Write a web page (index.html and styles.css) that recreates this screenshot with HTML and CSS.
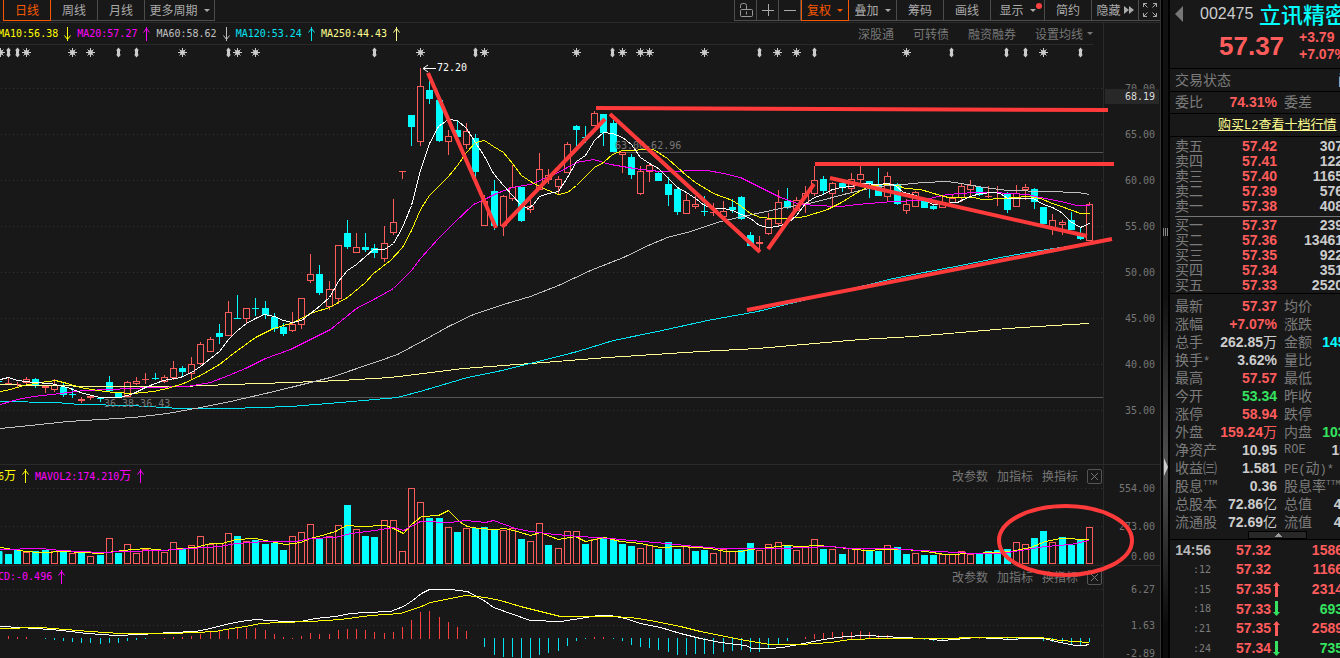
FILE: index.html
```html
<!DOCTYPE html>
<html lang="zh-CN">

<head>
  <meta charset="UTF-8" />
  <meta name="viewport" content="width=device-width, initial-scale=1.0" />
  <title>立讯精密 002475</title>
  <link rel="stylesheet" href="styles.css">
</head>

<body>
  <main class="main">
    <div class="toolbar">
      <div class="tabs">
        <button class="tab active">日线</button>
        <button class="tab">周线</button>
        <button class="tab">月线</button>
        <button class="tab tab-wide">更多周期<span class="caret"></span></button>
      </div>
      <div class="tools">
        <button class="tool tool-icon" aria-label="锁定">
          <svg width="16" height="16" viewBox="0 0 16 16" fill="none" stroke="#999">
            <rect x="2.5" y="7.500" width="12" height="7" rx="1" />
            <path d="M2.500 6V3.500a2 2 0 0 1 2-2h2a2 2 0 0 1 2 2V7M8.500 9.500v3" />
          </svg>
        </button>
        <button class="tool tool-icon" aria-label="放大">
          <svg width="12" height="12" viewBox="0 0 12 12" stroke="#aaa"><path d="M0 6.500h12M6.500 0v12" /></svg>
        </button>
        <button class="tool tool-icon" aria-label="缩小">
          <svg width="12" height="12" viewBox="0 0 12 12" stroke="#aaa"><path d="M0 6.500h12" /></svg>
        </button>
        <button class="tool active">复权<span class="caret"></span></button>
        <button class="tool tool-mid">叠加<span class="caret"></span></button>
        <button class="tool">筹码</button>
        <button class="tool">画线</button>
        <button class="tool tool-wide">显示<span class="caret"></span><span class="dot"></span></button>
        <button class="tool">简约</button>
        <button class="tool tool-hide">隐藏
          <svg width="10" height="8" viewBox="0 0 10 8" fill="#aaa"><path d="M0 0l5 4-5 4zM5 0l5 4-5 4z" /></svg>
        </button>
        <button class="tool tool-icon" aria-label="全屏">
          <svg width="14" height="14" viewBox="0 0 14 14" fill="none" stroke="#aaa">
            <path d="M.5 4V.5H4M.5.5l4 4M10 .5h3.500V4M13.500.5l-4 4M.5 10v3.500H4M.5 13.500l4-4M10 13.500h3.500V10M13.500 13.500l-4-4" />
          </svg>
        </button>
      </div>
    </div>

    <section class="panel panel-price">
      <div class="plot">
        <div class="legend legend-ma">
          <div class="readings">
            <span class="yellow">MA10:56.38</span><svg class="arrow yellow down"><use href="#arrow" /></svg>
            <span class="magenta">MA20:57.27</span><svg class="arrow magenta"><use href="#arrow" /></svg>
            <span class="silver">MA60:58.62</span><svg class="arrow silver down"><use href="#arrow" /></svg>
            <span class="aqua">MA120:53.24</span><svg class="arrow aqua"><use href="#arrow" /></svg>
            <span class="cream">MA250:44.43</span><svg class="arrow cream"><use href="#arrow" /></svg>
          </div>
          <div class="links">
            <button>深股通</button>
            <button>可转债</button>
            <button>融资融券</button>
            <button>设置均线<span class="caret"></span></button>
          </div>
        </div>
        <svg id="price" class="chart" width="1103" height="419" viewBox="0 45 1103 419"></svg>
      </div>
      <div class="axis">
        <span>70.00</span><span>65.00</span><span>60.00</span><span>55.00</span>
        <span>50.00</span><span>45.00</span><span>40.00</span><span>35.00</span>
        <span class="price-tag">68.19</span>
      </div>
    </section>

    <section class="panel panel-volume">
      <div class="plot">
        <div class="legend">
          <div class="readings">
            <span class="yellow">6<span class="unit">万</span></span><svg class="arrow yellow"><use href="#arrow" /></svg>
            <span class="magenta">MAVOL2:174.210<span class="unit">万</span></span><svg class="arrow magenta"><use href="#arrow" /></svg>
          </div>
          <div class="links links-indicator">
            <button>改参数</button>
            <button>加指标</button>
            <button>换指标</button>
            <button class="close" aria-label="关闭"><svg width="9" height="9" viewBox="0 0 9 9" stroke="#777"><path d="M1 1l7 7M8 1l-7 7" /></svg></button>
          </div>
        </div>
        <svg id="volume" class="chart" width="1103" height="78" viewBox="0 487 1103 78"></svg>
      </div>
      <div class="axis">
        <span>554.00</span><span>273.00</span><span>0.00</span>
      </div>
    </section>

    <section class="panel panel-macd">
      <div class="plot">
        <div class="legend">
          <div class="readings">
            <span class="magenta">CD:-0.496</span><svg class="arrow magenta"><use href="#arrow" /></svg>
          </div>
          <div class="links links-indicator">
            <button>改参数</button>
            <button>加指标</button>
            <button>换指标</button>
            <button class="close" aria-label="关闭"><svg width="9" height="9" viewBox="0 0 9 9" stroke="#777"><path d="M1 1l7 7M8 1l-7 7" /></svg></button>
          </div>
        </div>
        <svg id="macd" class="chart" width="1103" height="70" viewBox="0 588 1103 70"></svg>
      </div>
      <div class="axis">
        <span>6.27</span><span>1.63</span><span>-2.89</span>
      </div>
    </section>

    <!-- hand drawn trend lines -->
    <svg class="drawings" width="1161" height="658" viewBox="0 0 1161 658">
      <path d="M596 108L1108 110M815 164H1114M428 73L496 228M502 227L605 119M610 114L760 252M768 249L814 184M830 178L1087 236M747 310L1112 239" />
      <ellipse cx="1065.500" cy="540.500" rx="66.500" ry="34.500" />
    </svg>
  </main>

  <div class="splitter">
    <span class="grip"></span>
    <span class="fold"></span>
  </div>

  <aside class="side">
    <div class="side-inner">
      <header class="quote">
        <button class="prev" aria-label="上一个"></button>
        <span class="code">002475</span>
        <h1>立讯精密</h1>
        <strong class="last">57.37</strong>
        <div class="change"><span>+3.79</span><span>+7.07%</span></div>
      </header>
      <div class="line status"><span>交易状态</span><span class="state">闭市</span></div>
      <div class="line stat"><span>委比</span><b class="red">74.31%</b><span>委差</span></div>
      <div class="line buy"><a href="#">购买<span class="latin">L2</span>查看十档行情</a></div>

      <table class="book">
        <tbody>
          <tr><th>卖五</th><td class="red">57.42</td><td>307</td></tr>
          <tr><th>卖四</th><td class="red">57.41</td><td>122</td></tr>
          <tr><th>卖三</th><td class="red">57.40</td><td>1165</td></tr>
          <tr><th>卖二</th><td class="red">57.39</td><td>576</td></tr>
          <tr><th>卖一</th><td class="red">57.38</td><td>408</td></tr>
        </tbody>
      </table>
      <hr>
      <table class="book">
        <tbody>
          <tr><th>买一</th><td class="red">57.37</td><td>239</td></tr>
          <tr><th>买二</th><td class="red">57.36</td><td>13461</td></tr>
          <tr><th>买三</th><td class="red">57.35</td><td>922</td></tr>
          <tr><th>买四</th><td class="red">57.34</td><td>351</td></tr>
          <tr><th>买五</th><td class="red">57.33</td><td>2520</td></tr>
        </tbody>
      </table>

      <div class="stats">
        <div class="stat"><span>最新</span><b class="red">57.37</b><span>均价</span><b></b></div>
        <div class="stat"><span>涨幅</span><b class="red">+7.07%</b><span>涨跌</span><b></b></div>
        <div class="stat"><span>总手</span><b>262.85<i>万</i></b><span>金额</span><b class="cyan">145.96<i>亿</i></b></div>
        <div class="stat"><span>换手<span class="latin">*</span></span><b>3.62%</b><span>量比</span><b></b></div>
        <div class="stat"><span>最高</span><b class="red">57.57</b><span>最低</span><b></b></div>
        <div class="stat"><span>今开</span><b class="green">53.34</b><span>昨收</span><b></b></div>
        <div class="stat"><span>涨停</span><b class="red">58.94</b><span>跌停</span><b></b></div>
        <div class="stat"><span>外盘</span><b class="red">159.24<i>万</i></b><span>内盘</span><b class="green">103.61<i>万</i></b></div>
        <div class="stat"><span>净资产</span><b>10.95</b><span class="latin">ROE</span><b>15.01%</b></div>
        <div class="stat"><span>收益㈢</span><b>1.581</b><span><span class="latin">PE(</span>动<span class="latin">)*</span></span><b></b></div>
        <div class="stat"><span>股息<sup>TTM</sup></span><b>0.36</b><span>股息率<sup>TTM</sup></span><b></b></div>
        <div class="stat"><span>总股本</span><b>72.86<i>亿</i></b><span>总值</span><b>4180<i>亿</i></b></div>
        <div class="stat"><span>流通股</span><b>72.69<i>亿</i></b><span>流值</span><b>4170<i>亿</i></b></div>
      </div>
      <button class="collapse" aria-label="收起"></button>

      <div class="ticks">
        <div class="tick"><b class="time">14:56</b><b class="red">57.32</b><span></span><b class="red">1586</b></div>
        <div class="tick"><span class="time">:12</span><b class="red">57.32</b><span></span><b class="red">1166</b></div>
        <div class="tick"><span class="time">:15</span><b class="red">57.35</b><svg class="move red"><use href="#move" /></svg><b class="red">2314</b></div>
        <div class="tick"><span class="time">:18</span><b class="red">57.33</b><svg class="move green down"><use href="#move" /></svg><b class="green">693</b></div>
        <div class="tick"><span class="time">:21</span><b class="red">57.35</b><svg class="move red"><use href="#move" /></svg><b class="red">2589</b></div>
        <div class="tick"><span class="time">:24</span><b class="red">57.34</b><svg class="move green down"><use href="#move" /></svg><b class="green">735</b></div>
      </div>
    </div>
  </aside>

  <svg class="symbols" width="0" height="0">
    <symbol id="arrow" viewBox="0 0 7 14"><path d="M3.500 0v14M.5 5.500l3-4 3 4" fill="none" stroke="currentColor" /></symbol>
    <symbol id="move" viewBox="0 0 7 15"><path d="M3.500 0L7 4H5v11H2V4H0z" fill="currentColor" /></symbol>
  </svg>

  <script src="chart.js"></script>
</body>

</html>
```

FILE: styles.css
```css
* {
  box-sizing: border-box;
}

body {
  display: flex;
  height: 100vh;
  margin: 0;
  overflow: hidden;
  background-color: #181818;
  color: #ccc;
  font-family: "Liberation Sans", "Noto Sans CJK SC", sans-serif;
  font-size: 14px;
}

button {
  margin: 0;
  padding: 0;
  border: none;
  background: none;
  color: inherit;
  font: inherit;
  cursor: pointer;
}

.red {
  color: #ff5c5c;
}

.green {
  color: #35e35f;
}

.cyan {
  color: #00ffff;
}

.yellow {
  color: #ffff00;
}

.magenta {
  color: #ff00ff;
}

.silver {
  color: #c0c0c0;
}

.aqua {
  color: #00e4f4;
}

.cream {
  color: #ffff90;
}

.symbols {
  position: absolute;
}

.caret {
  border: 3px solid transparent;
  border-top-color: currentColor;
  border-bottom: none;
}

/* chart side */
.main {
  position: relative;
  display: flex;
  flex-direction: column;
  flex: 1;
  min-width: 0;
  overflow: hidden;
  border-right: 1px solid #333;
}

.toolbar {
  display: flex;
  justify-content: space-between;
  flex: none;
  height: 23px;
  border-bottom: 1px solid #2a2a2a;
  color: #aaa;
  font-family: "Noto Sans CJK SC", sans-serif;
  font-size: 12px;
  line-height: 20px;
}

.tabs,
.tools {
  display: flex;
  height: 21px;
}

.tabs {
  padding-left: 3px;
}

.tools {
  border-left: 1px solid #4c4c4c;
  margin-right: -1px;
}

.tab,
.tool {
  display: flex;
  align-items: center;
  justify-content: center;
  width: 47px;
  border-right: 1px solid #4c4c4c;
  border-bottom: 1px solid #4c4c4c;
}

.tab .caret,
.tool .caret {
  margin-left: 6px;
}

.tab-wide {
  width: 70px;
}

.tool-icon {
  width: 22px;
}

.tool-mid {
  width: 48px;
}

.tool-wide {
  position: relative;
  width: 54px;
}

.tool-hide {
  gap: 3px;
}

.tab.active,
.tool.active {
  width: 48px;
  border: 1px solid #f85800;
  border-top: none;
  color: #f85800;
}

.dot {
  position: absolute;
  top: 3px;
  right: 2px;
  width: 6px;
  height: 6px;
  border-radius: 50%;
  background-color: #ff4040;
}

.panel {
  display: flex;
  flex: none;
  border-bottom: 1px solid #2a2a2a;
}

.panel-price {
  height: 442px;
}

.panel-volume {
  height: 101px;
}

.panel-macd {
  height: 92px;
  border-bottom: none;
}

.plot {
  display: flex;
  flex-direction: column;
  align-items: flex-end;
  flex: 1;
  min-width: 0;
  overflow: hidden;
}

.chart {
  flex: none;
}

.legend {
  display: flex;
  align-items: center;
  justify-content: space-between;
  flex: none;
  width: 100%;
  height: 22px;
}

.legend-ma {
  width: calc(100% - 10px);
  margin-right: 10px;
  border-bottom: 1px solid #2a2a2a;
}

.readings {
  display: flex;
  align-items: center;
  gap: 6px;
  margin-left: -2px;
  font-family: "DejaVu Sans Mono", "Noto Sans CJK SC", monospace;
  font-size: 10px;
  line-height: 20px;
}

.unit {
  font-family: "Noto Sans CJK SC", sans-serif;
  font-size: 12px;
}

.arrow {
  width: 7px;
  height: 14px;
}

.down {
  transform: rotate(180deg);
}

.links {
  display: flex;
  align-items: center;
  gap: 19px;
  color: #777;
  font-family: "Noto Sans CJK SC", sans-serif;
  font-size: 12px;
  line-height: 20px;
}

.links button {
  display: flex;
  align-items: center;
}

.links .caret {
  margin-left: 4px;
}

.links-indicator {
  gap: 9px;
  padding-right: 1px;
}

.links .close {
  justify-content: center;
  width: 15px;
  height: 15px;
  border: 1px solid #555;
  border-radius: 2px;
}

.axis {
  position: relative;
  display: grid;
  align-content: start;
  flex: none;
  width: 57px;
  padding-right: 5px;
  border-left: 1px solid #2a2a2a;
  color: #777;
  font-family: "DejaVu Sans Mono", monospace;
  font-size: 10px;
  text-align: right;
  align-items: center;
}

.panel-price .axis {
  grid-auto-rows: 46px;
  padding-top: 42px;
}

.panel-volume .axis {
  grid-template-rows: 38px 38px 22px;
  padding-top: 4px;
}

.panel-macd .axis {
  grid-template-rows: 36px 36px 20px;
  padding-top: 5px;
}

.price-tag {
  position: absolute;
  top: 66px;
  right: 1px;
  width: 54px;
  height: 15px;
  padding-right: 4px;
  background-color: #282828;
  color: #ddd;
  line-height: 15px;
}

.drawings {
  position: absolute;
  top: 0;
  right: -1px;
  fill: none;
  stroke: #ff3a3a;
  stroke-width: 4px;
  pointer-events: none;
}

/* svg parts */
.grid {
  stroke: #333;
  stroke-dasharray: 1 3;
}

.up {
  fill: #181818;
  stroke: #ff5c5c;
}

.fall {
  fill: #00ffff;
  stroke: #00ffff;
}

.hist-up {
  stroke: #ff4040;
}

.hist-down {
  stroke: #00e4f4;
}

.curve {
  fill: none;
  stroke: currentColor;
}

.white {
  color: #fff;
}

.gap-line {
  stroke: #555;
}

.gap-text {
  fill: #777;
  font-family: "DejaVu Sans Mono", monospace;
  font-size: 10px;
}

.peak-text {
  fill: #fff;
  font-family: "DejaVu Sans Mono", monospace;
  font-size: 10px;
}

.peak-arrow {
  fill: none;
  stroke: #fff;
}

.mark {
  fill: #ccc;
  stroke: #ccc;
}

.diamond {
  fill: #ccc;
}

/* splitter */
.splitter {
  position: relative;
  flex: none;
  width: 9px;
  border: solid #000;
  border-width: 0 2px;
  background: linear-gradient(#111 0%, #111 45%, #505050 71%, #0c0c0c 95%);
}

.grip {
  position: absolute;
  top: 228px;
  left: 0;
  width: 5px;
  height: 8px;
  background: repeating-linear-gradient(90deg, #888 0 1px, transparent 1px 2px);
}

.fold {
  position: absolute;
  top: 458px;
  left: 1px;
  border: 9px solid transparent;
  border-left: 4px solid #ccc;
  border-right: none;
}

/* quote side */
.side {
  flex: 0 0 170px;
  overflow: hidden;
}

.side-inner {
  display: flex;
  flex-direction: column;
  width: 230px;
  height: 100%;
}

.quote {
  display: grid;
  grid-template-columns: 25px 59px 1fr;
  grid-template-rows: 28px 36px;
  align-items: center;
  flex: none;
  height: 69px;
  padding-left: 5px;
  border-bottom: 1px solid #000;
}

.prev {
  width: 8px;
  height: 16px;
  border: 8px solid transparent;
  border-left: none;
  border-right-color: #777;
}

.code {
  font-size: 16px;
}

h1 {
  margin: 0;
  color: #00ffff;
  font-family: "Noto Sans CJK SC", sans-serif;
  font-size: 22px;
  font-weight: 500;
  line-height: 26px;
  align-self: start;
}

.last {
  grid-column: 1 / 3;
  padding-left: 44px;
  color: #ff5c5c;
  font-size: 26px;
}

.change {
  display: flex;
  flex-direction: column;
  padding-left: 40px;
  color: #ff5c5c;
  font-weight: bold;
  line-height: 17px;
}

.line {
  flex: none;
  height: 22px;
  padding-left: 5px;
  border-bottom: 1px solid #000;
  color: #7c7c7c;
  line-height: 22px;
}

.status {
  height: 23px;
}

.state {
  margin-left: 107px;
  color: #ccc;
}

.buy {
  height: 23px;
  padding-left: 48px;
  font-size: 13px;
}

.buy a {
  color: #ffff90;
}

.latin {
  font-family: "Liberation Mono", monospace;
  font-size: 12px;
}

.book {
  width: 173px;
  border-collapse: collapse;
  table-layout: fixed;
  flex: none;
}

.buy + .book {
  margin-top: 2px;
}

.book th,
.book td {
  height: 15px;
  padding: 0;
  font-weight: bold;
  line-height: 15px;
  text-align: right;
}

.book th {
  width: 56px;
  padding-left: 5px;
  color: #7c7c7c;
  font-weight: normal;
  text-align: left;
}

.book td:nth-child(2) {
  width: 51px;
}

hr {
  flex: none;
  align-self: stretch;
  margin: 2px 0 1px 5px;
  border: none;
  border-top: 1px solid #777;
}

.stats {
  flex: none;
  padding-top: 3px;
  border-top: 1px solid #000;
}

.stat {
  display: grid;
  grid-template-columns: 50px 52px 52px 50px;
  height: 18px;
  padding-left: 5px;
  color: #7c7c7c;
  line-height: 18px;
  white-space: nowrap;
}

.stat.line {
  height: 22px;
  line-height: 20px;
}

.stat > :nth-child(2n) {
  justify-self: end;
}

.stat > :nth-child(3) {
  padding-left: 7px;
}

.stat b:not([class]) {
  color: #ccc;
}

.stat i {
  font-style: normal;
  font-weight: normal;
}

sup {
  font-family: "Liberation Mono", monospace;
  font-size: 8px;
  line-height: 8px;
  vertical-align: 6px;
}

.collapse {
  flex: none;
  align-self: flex-start;
  width: 59px;
  height: 8px;
  margin-left: 78px;
  border: 1px solid #000;
  background: conic-gradient(from 135deg at 50% 0, #999 90deg, #282828 0) center / 8px 4px no-repeat #282828;
}

.ticks {
  display: grid;
  flex: 1;
  min-height: 0;
  border-top: 1px solid #000;
}

.tick {
  display: grid;
  grid-template-columns: 36px 60px 10px 62px;
  align-items: center;
  padding-left: 5px;
  text-align: right;
}

.time {
  color: #bbb;
}

span.time {
  color: #7c7c7c;
  font-family: "DejaVu Sans Mono", monospace;
  font-size: 10px;
}

.move {
  width: 7px;
  height: 15px;
  margin-left: 2px;
}
```

FILE: chart.js
```js
// direction, high, body top, body bottom, low
const candles = `
u 378 383 384 384,u 382 384 385 388,u 377 379 383 384,d 378 379 385 388,u 386 386 388 393,u 379 385 390 392,d 382 387 395 397,d 388 394 395 398,
u 397 399 401 403,u 395 396 398 400,d 397 398 399 402,d 376 382 391 391,d 392 392 397 397,u 381 382 397 397,u 377 381 384 385,u 373 379 380 384,
d 373 378 379 380,u 375 377 382 383,u 361 368 378 380,d 366 368 372 377,u 357 364 374 379,u 342 344 364 365,u 337 339 352 352,d 324 333 337 344,
u 301 312 336 336,d 295 318 319 319,u 308 308 319 323,d 298 308 309 316,d 301 308 315 319,d 313 317 329 332,d 323 327 334 336,u 312 324 331 332,
u 298 298 325 329,u 254 274 281 283,d 265 274 293 295,u 281 289 307 310,u 245 245 299 304,d 220 233 247 249,u 233 247 253 253,d 233 247 250 252,
d 244 248 253 258,u 226 243 259 262,u 199 222 233 235,u 171 171 172 179,d 115 115 127 146,u 68 86 142 146,d 80 90 99 104,d 100 100 141 142,
u 130 136 142 155,d 121 130 137 137,u 123 131 145 149,d 134 138 172 178,u 195 201 226 226,d 180 191 226 230,u 195 196 226 236,u 165 187 199 201,
d 187 187 221 222,u 196 206 210 213,u 153 169 190 190,u 169 175 180 184,u 176 179 187 195,u 142 144 173 173,d 125 126 130 146,d 126 137 138 143,
u 111 113 126 126,d 114 114 133 146,d 120 123 152 152,u 152 152 155 173,d 154 157 175 179,u 166 171 194 195,u 164 165 172 182,d 172 173 181 181,
d 177 184 195 206,d 188 189 212 215,u 194 200 214 214,u 196 204 207 209,d 196 211 212 216,u 203 212 213 216,u 201 211 217 220,d 199 207 210 213,
d 196 197 219 220,d 232 235 246 246,u 236 242 244 250,u 213 219 234 235,u 190 202 224 226,d 188 201 208 209,u 197 200 211 211,u 186 193 204 213,
u 166 180 194 196,d 176 179 191 194,u 182 183 194 206,d 180 183 187 192,u 173 179 189 192,u 166 174 180 184,d 181 181 184 198,d 168 185 196 196,
u 172 176 197 201,d 183 184 204 205,u 199 204 211 214,u 191 192 207 207,d 198 198 208 208,d 204 206 209 210,u 196 202 208 208,u 194 198 203 203,
u 184 186 198 202,u 180 185 190 196,d 187 187 195 196,u 186 196 197 198,u 186 198 199 206,d 192 194 210 213,u 185 193 207 207,u 184 187 190 200,
d 188 189 202 209,d 207 207 224 224,u 214 220 228 235,u 220 222 225 235,d 212 220 230 230,d 228 235 239 240,u 202 204 241 241`.trim().split(",");

// negative values are falling days
const volumes = [-10, -14, 12, -13, -14, 13, -13, 11, -12, 8, -9, 26, -11, 20, 11, 15, 14, 12, 22, -15, 19, 28, 20, 21, 31, -28, 23, -24, -20, -21,
  -14, 28, 32, 40, -25, 28, 39, -59, 35, -28, -27, 44, 44, 13, 76, 62, -46, -46, 37, -32, 36, -36, -37, -35, 34, 36, -25, 23, 41, -19,
  16, 33, 33, -20, 25, -26, -24, -20, -18, 16, 19, -15, -22, -15, 18, -13, -14, 11, 15, 13, -14, -21, 14, 20, 22, -18, 14, 18, 25, -15,
  15, -10, 16, 16, -13, -13, 19, -17, -10, 11, -9, -9, 10, 10, 13, 10, -11, -13, -14, -15, 22, 20, -26, -33, 22, -27, -19, -24, 37];

const histogram = [3, 2, 2, 0, -1, -2, -3, -4, -5, -5, -6, -5, -5, -3, -2, -1, 0, 1, 2, 2, 3, 5, 7, 8, 10, 11, 11, 11, 9, 5,
  2, 1, 3, 6, 5, 5, 9, 10, 10, 9, 7, 6, 7, 12, 19, 27, 28, 22, 17, 12, 8, 0, -9, -17, -19, -19, -20, -20, -17, -15,
  -13, -8, -3, -1, 2, 2, -1, -3, -7, -9, -10, -12, -14, -17, -17, -16, -16, -16, -14, -13, -12, -14, -14, -10, -6, -3, 0, 2, 5, 6,
  7, 7, 7, 8, 7, 4, 4, 2, 0, 0, -2, -3, -3, -2, 0, 1, 1, 1, 0, -1, -1, 1, 0, -3, -4, -5, -6, -8, -4];

const priceCurves = {
  cream: "0,384 33,385 110,386 180,386 230,384 290,382 340,380 390,377 463,368 530,363 607,357 700,351 757,348 860,339 913,336 960,332 1007,328 1053,325 1089,323",
  aqua: "0,401 55,402 80,404 130,405 180,408 230,408 260,407 290,406 340,402 397,397 423,390 467,377 497,371 530,363 577,351 613,340 657,331 707,320 757,311 860,286 893,278 913,274 960,265 1000,257 1033,251 1067,246 1089,243",
  silver: "0,428 30,425 67,421 100,419 133,417 167,413 200,407 230,401 265,393 290,387 330,377 377,361 397,354 423,340 448,326 473,314 503,304 530,296 558,285 590,270 623,257 650,244 667,237 690,231 720,221 747,215 780,208 813,202 847,193 877,186 903,184 923,182 947,181 967,184 983,187 1007,190 1047,191 1077,192 1089,194",
  magenta: "0,404 17,399 33,396 60,393 83,390 110,389 130,388 150,387 187,386 210,382 228,375 245,368 265,358 290,349 330,329 356,308 377,297 393,288 411,270 420,258 438,238 453,223 473,204 484,199 496,193 512,187 530,184 558,172 576,162 593,159 610,164 640,169 660,171 707,170 723,173 740,177 760,187 780,197 797,203 813,205 840,206 857,204 893,201 920,200 947,194 973,192 993,192 1027,194 1040,197 1060,201 1077,205 1089,205",
  yellow: "0,391 10,389 23,385 40,382 55,380 67,383 80,387 97,390 113,392 133,393 153,391 167,388 183,383 200,375 219,364 233,353 255,337 273,328 290,323 301,318 310,313 329,307 347,297 365,282 373,273 390,260 402,247 411,230 420,209 429,195 448,176 457,165 466,152 475,142 484,140 493,146 503,152 512,163 521,175 530,181 539,186 548,190 558,194 567,192 576,185 594,167 603,162 612,154 622,150 653,149 667,158 677,167 686,175 695,182 713,193 732,200 741,206 750,213 760,217 773,218 790,218 805,216 827,209 841,202 857,192 870,185 887,184 897,185 905,188 920,189 940,195 948,197 973,197 982,199 1003,198 1027,196 1040,198 1052,203 1061,206 1080,213 1089,213",
  white: "0,379 8,377 17,380 33,382 50,383 67,387 83,393 100,397 120,397 133,393 147,386 163,380 180,377 191,372 200,366 210,358 219,351 228,339 237,330 246,323 255,318 264,314 274,316 283,320 292,322 301,320 310,313 320,305 329,297 338,281 347,270 356,264 365,256 373,249 384,249 393,243 402,227 411,205 420,170 429,143 438,126 448,119 457,120 466,128 475,142 484,156 493,173 503,185 512,195 521,205 528,208 533,204 539,196 548,193 558,191 567,177 576,161 585,155 594,140 603,132 612,133 622,137 631,144 640,157 649,163 658,168 667,177 677,187 686,192 695,198 704,205 713,208 723,208 732,210 741,214 750,218 759,225 768,227 777,226 787,223 796,215 805,203 814,197 823,194 832,189 841,187 851,186 863,183 878,184 887,183 895,185 903,192 915,195 924,200 933,204 942,203 957,202 963,199 970,196 980,193 993,192 1000,193 1007,198 1033,198 1043,204 1052,207 1061,212 1070,221 1080,227 1089,223"
};

const volumeCurves = {
  yellow: "0,547 13,549 25,551 40,552 65,551 82,552 100,553 107,552 122,550 145,548 165,550 180,548 195,547 210,543 222,543 235,539 255,538 270,541 285,544 300,542 310,538 325,534 335,531 346,525 360,526 385,525 393,528 403,533 411,524 421,516 438,515 448,510 460,522 467,526 478,528 495,529 505,528 520,532 530,535 540,532 550,536 558,539 575,536 585,541 604,537 620,541 640,543 660,547 680,546 710,548 725,551 740,551 750,549 770,547 785,545 800,546 817,545 830,546 847,548 865,550 885,549 905,549 925,551 945,554 975,553 990,552 1010,551 1030,547 1045,541 1060,538 1089,539",
  magenta: "0,549 40,548 60,550 100,552 125,551 160,550 190,548 220,546 235,543 265,541 295,541 310,538 335,537 350,533 375,530 393,527 403,530 420,521 450,522 465,520 485,522 493,520 515,528 530,531 555,534 580,536 610,538 630,540 655,542 685,545 720,548 765,548 780,548 830,546 850,548 890,548 920,550 975,553 1000,553 1020,550 1045,546 1070,544 1089,540"
};

const macdCurves = {
  white: "0,626 20,627 50,629 70,631 87,633 115,635 140,634 170,632 195,631 210,628 225,624 240,621 255,619 270,620 285,621 300,621 315,618 335,616 350,613 365,612 390,611 403,606 412,600 421,593 429,589 450,589 467,591 476,596 485,601 493,607 510,613 530,620 560,621 580,618 597,615 610,615 625,618 640,623 660,627 680,633 700,638 720,642 745,645 752,648 770,648 782,647 803,643 823,639 845,636 865,635 885,636 900,637 925,638 940,640 955,639 975,637 995,638 1010,639 1025,638 1043,638 1060,642 1075,645 1083,645 1089,644",
  yellow: "0,628 40,627 65,629 90,631 120,633 170,633 195,632 215,631 225,629 245,626 260,623 280,622 310,621 340,619 370,615 400,613 412,609 421,606 430,602 450,598 465,595 485,597 500,600 520,606 540,611 560,616 610,616 630,617 650,620 680,626 700,631 725,636 745,640 770,644 800,644 830,642 850,639 880,638 1040,637 1060,640 1089,642"
};

const stars = [0, 26, 72, 90, 182, 237, 255, 420, 484, 576, 622, 640, 649, 704, 777, 796, 906, 1043];
const diamonds = [8, 17, 118, 136, 228, 374, 475, 612, 759, 814, 951, 1006, 1025, 1080];

function xOf(i) {
  return Math.round(8 + 9.161 * i) + 0.5;
}

function gridLines(ys) {
  return ys.map(y => `<path class="grid" d="M1 ${y}.5H1103" />`).join("");
}

function curves(lines) {
  return Object.keys(lines)
    .map(name => `<polyline class="curve ${name}" shape-rendering="crispEdges" points="${lines[name]}" transform="translate(.5 .5)" />`)
    .join("");
}

function drawPrice() {
  let out = gridLines([88, 134, 180, 226, 272, 318, 364, 410]);

  out += `<path class="gap-line" d="M613 152.500H1103M100 397.500H1103" />`;
  out += `<path class="fall" d="M0 381.500H2" />`;

  candles.forEach((row, i) => {
    const [dir, ...values] = row.trim().split(" ");
    const [high, top, bottom, low] = values.map(Number);
    const x = xOf(i);
    const cls = dir === "u" ? "up" : "fall";
    out += `<path class="${cls}" d="M${x} ${high}V${top}M${x} ${bottom}V${low}" />`;
    out += `<rect class="${cls}" x="${x - 3}" y="${top + 0.5}" width="6" height="${Math.max(bottom - top - 1, 0.01)}" />`;
  });

  out += curves(priceCurves);

  stars.forEach(x => {
    out += `<g class="mark"><circle cx="${x + 0.5}" cy="52.500" r="2" /><path d="M${x + 0.5} 48v9M${x - 4} 52.500h9M${x - 2.5} 49.500l6 6M${x + 3.5} 49.500l-6 6" /></g>`;
  });
  diamonds.forEach(x => {
    out += `<path class="diamond" d="M${x + 0.5} 47.500l2.500 3h-1v4h1l-2.500 3-2.500-3h1v-4h-1z" />`;
  });

  out += `<text class="gap-text" x="615" y="149">63.00-62.96</text>`;
  out += `<text class="gap-text" x="104" y="407">36.38-36.43</text>`;
  out += `<path class="peak-arrow" d="M436 68.500H423M428 65l-5 3.500 5 3.500" />`;
  out += `<text class="peak-text" x="437" y="71">72.20</text>`;

  document.getElementById("price").innerHTML = out;
}

function drawVolume() {
  let out = gridLines([488, 526, 563]);

  out += `<path class="fall" d="M0 551.500H2V563.500H0z" />`;
  volumes.forEach((v, i) => {
    const h = Math.abs(v);
    out += `<rect class="${v > 0 ? "up" : "fall"}" x="${xOf(i) - 3}" y="${564.5 - h}" width="6" height="${h - 1}" />`;
  });

  document.getElementById("volume").innerHTML = out + curves(volumeCurves);
}

function drawMacd() {
  let out = gridLines([589, 625]);

  histogram.forEach((v, i) => {
    if (v > 0) out += `<path class="hist-up" d="M${xOf(i)} ${639 - v}V639" />`;
    if (v < 0) out += `<path class="hist-down" d="M${xOf(i)} 638V${638 - v}" />`;
  });

  document.getElementById("macd").innerHTML = out + curves(macdCurves);
}

drawPrice();
drawVolume();
drawMacd();
```
